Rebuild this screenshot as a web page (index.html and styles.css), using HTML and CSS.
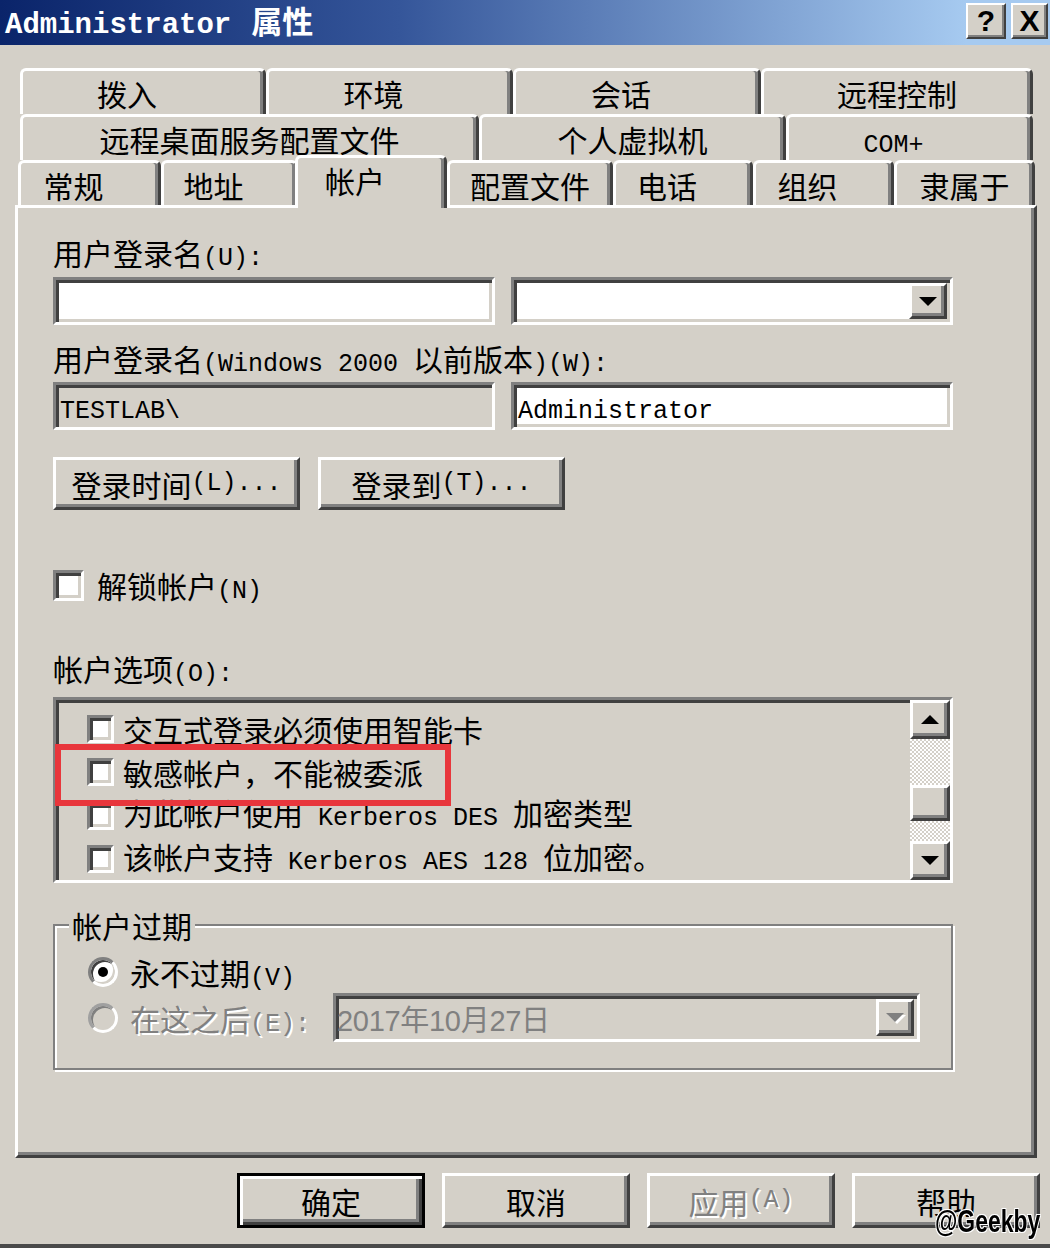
FILE: index.html
```html
<!DOCTYPE html>
<html lang="zh-CN">
<head>
<meta charset="utf-8">
<title>Administrator 属性</title>
<link rel="stylesheet" href="styles.css">
</head>
<body>
<div class="window">
  <div class="titlebar">
    <div class="title"><span class="title-en">Administrator</span><span class="title-zh">属性</span></div>
    <div class="title-btns">
      <div class="tbtn">?</div>
      <div class="tbtn tbtn-x">X</div>
    </div>
  </div>

  <div class="tabs">
    <div class="tab-row row-top">
      <div class="tab t-a shift">拨入</div>
      <div class="tab t-b shift">环境</div>
      <div class="tab t-c shift">会话</div>
      <div class="tab t-d">远程控制</div>
    </div>
    <div class="tab-row row-top">
      <div class="tab t-e">远程桌面服务配置文件</div>
      <div class="tab t-f">个人虚拟机</div>
      <div class="tab t-g shift"><span class="en">COM+</span></div>
    </div>
    <div class="tab-row row-front">
      <div class="tab t-h shift">常规</div>
      <div class="tab t-i shift">地址</div>
      <div class="tab t-j tab-active shift">帐户</div>
      <div class="tab t-k">配置文件</div>
      <div class="tab t-l shift">电话</div>
      <div class="tab t-m shift">组织</div>
      <div class="tab t-n">隶属于</div>
    </div>
  </div>

  <div class="panel">
    <div class="field-label">用户登录名<span class="en">(U):</span></div>
    <div class="input-row">
      <div class="input sunken"></div>
      <div class="input combo sunken">
        <div class="drop-btn raised"><span class="tri-down"></span></div>
      </div>
    </div>

    <div class="field-label label-2">用户登录名<span class="en">(Windows 2000 </span>以前版本<span class="en">)(W):</span></div>
    <div class="input-row input-row-2">
      <div class="input sunken readonly"><span class="en">TESTLAB\</span></div>
      <div class="input sunken"><span class="en">Administrator</span></div>
    </div>

    <div class="btn-row">
      <div class="btn raised wide">登录时间<span class="en">(L)...</span></div>
      <div class="btn raised wide">登录到<span class="en">(T)...</span></div>
    </div>

    <div class="check-row">
      <span class="checkbox sunken-box"></span>
      <span>解锁帐户<span class="en">(N)</span></span>
    </div>

    <div class="field-label label-3">帐户选项<span class="en">(O):</span></div>
    <div class="listbox sunken">
      <div class="list-items">
        <div class="list-item"><span class="checkbox small sunken-box"></span><span>交互式登录必须使用智能卡</span></div>
        <div class="list-item"><span class="checkbox small sunken-box"></span><span>敏感帐户，不能被委派</span></div>
        <div class="list-item"><span class="checkbox small sunken-box"></span><span>为此帐户使用<span class="en"> Kerberos DES </span>加密类型</span></div>
        <div class="list-item"><span class="checkbox small sunken-box"></span><span>该帐户支持<span class="en"> Kerberos AES 128 </span>位加密。</span></div>
      </div>
      <div class="scrollbar">
        <div class="sb-btn raised"><span class="tri-up"></span></div>
        <div class="sb-track track-a"></div>
        <div class="sb-thumb raised"></div>
        <div class="sb-track track-b"></div>
        <div class="sb-btn raised"><span class="tri-down"></span></div>
      </div>
      <div class="highlight"></div>
    </div>

    <fieldset class="groupbox">
      <legend>帐户过期</legend>
      <div class="gb-body">
        <div class="radio-row">
          <span class="radio checked"><span class="dot"></span></span>
          <span>永不过期<span class="en">(V)</span></span>
        </div>
        <div class="radio-row date-row">
          <span class="radio disabled-radio"></span>
          <span class="disabled">在这之后<span class="en">(E):</span></span>
          <div class="date-combo sunken">
            <span class="date-text">2017年10月27日</span>
            <div class="drop-btn raised date-drop"><span class="tri-down gray"></span></div>
          </div>
        </div>
      </div>
    </fieldset>
  </div>

  <div class="actions">
    <div class="btn raised action default">确定</div>
    <div class="btn raised action">取消</div>
    <div class="btn raised action disabled">应用<span class="en">(A)</span></div>
    <div class="btn raised action">帮助</div>
  </div>

  <div class="watermark">@Geekby</div>
</div>
</body>
</html>
```

FILE: styles.css
```css
* { box-sizing: border-box; }

html, body {
  margin: 0;
  padding: 0;
}

body {
  background: #d4d0c8;
  font-family: "Noto Sans CJK SC", "Noto Sans", sans-serif;
  font-size: 30px;
  color: #000;
}

.en {
  font-family: "Liberation Mono", "Noto Sans CJK SC", monospace;
  font-size: 25px;
}

.window {
  position: relative;
  width: 1050px;
  height: 1248px;
  overflow: hidden;
  border-bottom: 4px solid #4a4a4a;
}

/* ---------- title bar ---------- */
.titlebar {
  height: 45px;
  background: linear-gradient(90deg, #0a246a 0%, #35569a 38%, #a6caf0 92%, #a6caf0 100%);
  display: flex;
  align-items: center;
  justify-content: space-between;
  padding: 0 2px 0 5px;
}

.title {
  display: flex;
  align-items: baseline;
  gap: 20px;
  color: #fff;
  font-weight: bold;
  font-size: 31px;
  line-height: 40px;
  white-space: nowrap;
}

.title-en {
  font-family: "Liberation Mono", monospace;
  font-size: 29px;
  font-weight: bold;
}

.title-btns {
  display: flex;
  gap: 5px;
  padding-bottom: 4px;
}

.tbtn {
  width: 40px;
  height: 36px;
  background: #d4d0c8;
  border: 2px solid;
  border-color: #fff #404040 #404040 #fff;
  box-shadow: inset -2px -2px #808080;
  font-family: "Liberation Sans", sans-serif;
  font-weight: bold;
  font-size: 30px;
  line-height: 31px;
  text-align: center;
}

.tbtn-x { width: 37px; }

/* ---------- tabs ---------- */
.tabs {
  margin: 23px 0 0 18px;
  width: 1017px;
}

.tab-row {
  display: flex;
  height: 46px;
}

.row-top { padding-left: 2px; }

.row-front {
  height: 45px;
  align-items: flex-end;
}

.tab {
  flex: none;
  height: 100%;
  background: #d4d0c8;
  border-top: 3px solid #fff;
  border-left: 3px solid #fff;
  border-right: 3px solid #404040;
  box-shadow: inset -3px 0 #808080;
  border-radius: 6px 6px 0 0;
  text-align: center;
  line-height: 44px;
  white-space: nowrap;
}

.row-front .tab { height: 45px; }

.tab.shift { padding-right: 32px; }

.t-a { width: 246px; }
.t-b { width: 247px; }
.t-c { width: 248px; }
.t-d { width: 272px; }
.t-e { width: 459px; }
.t-f { width: 307px; }
.t-g { width: 247px; }
.t-h { width: 143px; }
.t-i { width: 137px; }
.t-j { width: 152px; }
.t-k { width: 166px; }
.t-l { width: 140px; }
.t-m { width: 141px; }
.t-n { width: 141px; }

.row-front .tab-active {
  height: 53px;
  margin-left: -3px;
  margin-bottom: -3px;
  position: relative;
  z-index: 2;
  box-shadow: inset -3px 0 #808080;
}

/* ---------- panel ---------- */
.panel {
  margin-left: 15px;
  width: 1022px;
  height: 953px;
  border-top: 3px solid #fff;
  border-left: 3px solid #fff;
  border-right: 3px solid #404040;
  border-bottom: 3px solid #404040;
  box-shadow: inset -3px -3px #808080;
  padding: 27px 0 0 35px;
}

.field-label {
  height: 34px;
  line-height: 34px;
  white-space: nowrap;
}

.label-2 { margin-top: 16px; }
.label-3 { margin-top: 49px; }

.sunken {
  border: 3px solid;
  border-color: #808080 #fff #fff #808080;
  box-shadow: inset 3px 3px #404040, inset -3px -3px #d4d0c8;
}

.raised {
  background: #d4d0c8;
  border: 3px solid;
  border-color: #fff #404040 #404040 #fff;
  box-shadow: inset -3px -3px #808080;
}

.input-row {
  display: flex;
  justify-content: space-between;
  width: 900px;
  margin-top: 8px;
}

.input-row-2 { margin-top: 7px; }

.input {
  width: 442px;
  height: 48px;
  background: #fff;
  padding-left: 4px;
  line-height: 40px;
  white-space: nowrap;
}

.input.readonly { background: #d4d0c8; }

.combo {
  display: flex;
  justify-content: flex-end;
  padding: 3px 3px 3px 0;
}

.drop-btn {
  width: 38px;
  height: 36px;
  display: flex;
  align-items: center;
  justify-content: center;
}

.tri-down {
  display: block;
  width: 0;
  height: 0;
  border-left: 9px solid transparent;
  border-right: 9px solid transparent;
  border-top: 9px solid #000;
}

.tri-up {
  display: block;
  width: 0;
  height: 0;
  border-left: 9px solid transparent;
  border-right: 9px solid transparent;
  border-bottom: 9px solid #000;
}

.tri-down.gray {
  border-top-color: #808080;
  filter: drop-shadow(2px 2px 0 #fff);
}

.btn {
  display: flex;
  align-items: center;
  justify-content: center;
  white-space: nowrap;
}

.btn-row {
  display: flex;
  gap: 18px;
  margin-top: 27px;
}

.btn.wide {
  width: 247px;
  height: 53px;
}

.check-row {
  display: flex;
  align-items: center;
  gap: 13px;
  height: 34px;
  margin-top: 58px;
  white-space: nowrap;
}

.checkbox {
  flex: none;
  display: block;
  width: 31px;
  height: 31px;
  background: #fff;
}

.checkbox.small {
  width: 27px;
  height: 28px;
}

.sunken-box {
  border: 3px solid;
  border-color: #808080 #fff #fff #808080;
  box-shadow: inset 3px 3px #404040, inset -3px -3px #d4d0c8;
}

/* ---------- listbox ---------- */
.listbox {
  position: relative;
  display: flex;
  width: 900px;
  height: 186px;
  margin-top: 12px;
  background: #d4d0c8;
}

.list-items {
  flex: 1;
  padding: 7px 0 0 31px;
  overflow: hidden;
}

.list-item {
  display: flex;
  align-items: center;
  gap: 9px;
  height: 43.5px;
  line-height: 34px;
  white-space: nowrap;
}

.scrollbar {
  flex: none;
  width: 40px;
  display: flex;
  flex-direction: column;
}

.sb-btn {
  height: 39px;
  display: flex;
  align-items: center;
  justify-content: center;
}

.sb-track {
  background: repeating-conic-gradient(#d4d0c8 0 25%, #fff 0 50%) 0 0 / 4px 4px;
}

.track-a { height: 46px; }
.track-b { height: 20px; }

.sb-thumb { height: 36px; }

.highlight {
  position: absolute;
  left: -1px;
  top: 44px;
  width: 396px;
  height: 62px;
  border: 6px solid #e8363c;
  z-index: 3;
}

/* ---------- groupbox ---------- */
.groupbox {
  width: 900px;
  margin: 25px 0 0 0;
  padding: 0;
  border: 2px solid #808080;
  box-shadow: inset 2px 2px #fff, 2px 2px #fff;
  min-inline-size: 0;
}

.groupbox legend {
  margin-left: 14px;
  padding: 0 3px;
  line-height: 34px;
  background: #d4d0c8;
}

.gb-body {
  padding: 13px 0 26px 33px;
}

.radio-row {
  display: flex;
  align-items: center;
  gap: 12px;
  height: 34px;
  white-space: nowrap;
}

.date-row {
  height: 49px;
  margin-top: 4px;
}

.radio {
  flex: none;
  width: 30px;
  height: 30px;
  border-radius: 50%;
  border: 3px solid;
  border-color: #808080 #fff #fff #808080;
  box-shadow: inset 2px 2px #404040, inset -2px -2px #d4d0c8;
  background: #fff;
  display: flex;
  align-items: center;
  justify-content: center;
}

.radio .dot {
  width: 10px;
  height: 10px;
  border-radius: 50%;
  background: #000;
}

.disabled-radio {
  background: #d4d0c8;
  border-color: #a0a0a0 #fff #fff #a0a0a0;
  box-shadow: inset 2px 2px #808080;
}

.disabled {
  color: #808080;
  text-shadow: 2px 2px 0 #fff;
}

.date-combo {
  width: 587px;
  height: 49px;
  margin-left: 11px;
  background: #d4d0c8;
  display: flex;
  align-items: center;
  justify-content: space-between;
  padding: 3px 3px 3px 1px;
}

.date-text {
  font-family: "Liberation Sans", "Noto Sans CJK SC", sans-serif;
  font-size: 29px;
  color: #808080;
  letter-spacing: -0.3px;
}

.date-drop { height: 37px; }

/* ---------- bottom actions ---------- */
.actions {
  display: flex;
  justify-content: flex-end;
  gap: 17px;
  margin-top: 15px;
  padding-right: 10px;
}

.btn.action {
  width: 188px;
  height: 55px;
}

.btn.default {
  border-color: #000;
  box-shadow: inset 3px 3px #fff, inset -3px -3px #404040, inset -6px -6px #808080;
}

.watermark {
  position: absolute;
  right: 10px;
  bottom: 4px;
  font-family: "Liberation Sans", sans-serif;
  font-weight: bold;
  font-size: 31px;
  line-height: 36px;
  color: #000;
  transform: scaleX(0.74);
  transform-origin: right bottom;
  text-shadow: 1px 1px 0 #fff, -1px -1px 0 #fff, 1px -1px 0 #fff, -1px 1px 0 #fff;
  z-index: 5;
}
```
